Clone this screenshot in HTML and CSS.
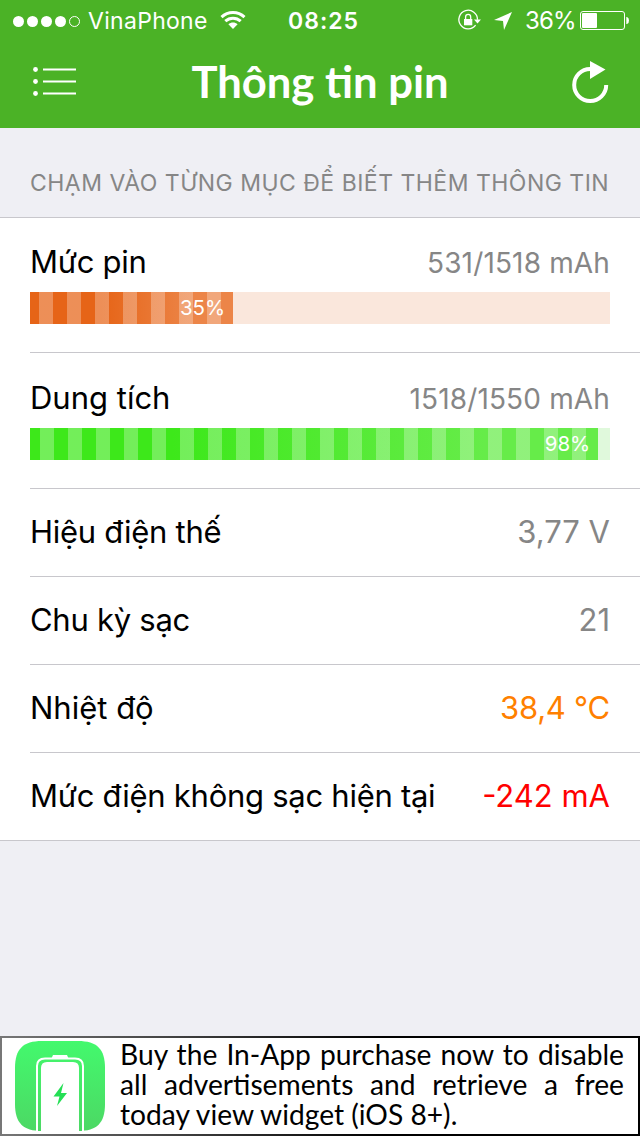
FILE: index.html
```html
<!DOCTYPE html>
<html lang="vi">
<head>
<meta charset="utf-8">
<title>Thông tin pin</title>
<link rel="stylesheet" href="styles.css">
</head>
<body>
<div class="app">
  <header class="header">
    <div class="status">
      <svg class="signal" width="68" height="12" viewBox="0 0 68 12"><g fill="#fff"><circle cx="5.500" cy="6.500" r="5.500"/><circle cx="19.500" cy="6.500" r="5.500"/><circle cx="33.500" cy="6.500" r="5.500"/><circle cx="47.500" cy="6.500" r="5.500"/></g><circle cx="61.500" cy="6.500" r="5" fill="none" stroke="#fff"/></svg>
      <span class="carrier">VinaPhone</span>
      <svg class="wifi" width="26" height="20" viewBox="0 0 26 20"><g fill="none" stroke="#fff" stroke-width="3"><path d="M1.5 7.2C8 1 18 1 24.500 7.200"/><path d="M5.300 11.200C9.700 7.200 16.300 7.200 20.700 11.200"/></g><path d="M8.400 14.300C11 12 15 12 17.600 14.300L13 19Z" fill="#fff"/></svg>
      <span class="time">08:25</span>
      <svg class="lock" width="24" height="20" viewBox="0 0 24 20"><path d="M17.600 15.200A9.300 9.300 0 1 1 19.500 9.800" fill="none" stroke="#fff" stroke-width="1.300"/><path d="M16 9.500H23L19.500 13.500Z" fill="#fff"/><rect x="6" y="9" width="8.300" height="6.300" fill="#fff"/><path d="M7.600 9.500V7A2.500 2.500 0 0 1 12.700 7V9.500" fill="none" stroke="#fff" stroke-width="1.300"/></svg>
      <svg class="locate" width="18" height="18" viewBox="0 0 18 18"><path d="M18 0L10 18L9 9L0 8Z" fill="#fff"/></svg>
      <span class="percent">36%</span>
      <svg class="battery" width="50" height="20" viewBox="0 0 50 20"><rect x=".5" y="1.500" width="44" height="18" rx="2.500" fill="none" stroke="#fff"/><rect x="2" y="3" width="15" height="15" rx="1" fill="#fff"/><path d="M46.300 7H47Q49 7.500 49 10.500T47 14H46.300Z" fill="#fff"/></svg>
    </div>
    <div class="nav">
      <svg class="menu" width="44" height="30" viewBox="0 0 44 30"><g fill="#fff"><circle cx="2.500" cy="2.500" r="2.400"/><circle cx="2.500" cy="14.500" r="2.400"/><circle cx="2.500" cy="26.500" r="2.400"/><path d="M10 1.500h33v2H10zM10 13.500h33v2H10zM10 25.500h33v2H10z"/></g></svg>
      <h1 class="title">Thông tin pin</h1>
      <svg class="refresh" width="38" height="44" viewBox="0 0 38 44"><path d="M34.200 24A16 16 0 1 1 18.200 8" fill="none" stroke="#fff" stroke-width="4"/><path d="M18 0L33.500 8.500L18 18Z" fill="#fff"/></svg>
    </div>
  </header>
  <div class="hint"><span>CHẠM VÀO TỪNG MỤC ĐỂ BIẾT THÊM THÔNG TIN</span></div>
  <main class="list">
    <section class="row meter first">
      <div class="line"><span class="label">Mức pin</span><span class="amount">531/1518 mAh</span></div>
      <div class="track orange"><div class="fill" style="width:203px"><span>35%</span></div></div>
    </section>
    <section class="row meter">
      <div class="line"><span class="label wide">Dung tích</span><span class="amount">1518/1550 mAh</span></div>
      <div class="track green"><div class="fill" style="width:568px"><span>98%</span></div></div>
    </section>
    <section class="row line"><span class="label">Hiệu điện thế</span><span class="value">3,77 V</span></section>
    <section class="row line"><span class="label">Chu kỳ sạc</span><span class="value">21</span></section>
    <section class="row line"><span class="label wide">Nhiệt độ</span><span class="value warm">38,4 °C</span></section>
    <section class="row line"><span class="label">Mức điện không sạc hiện tại</span><span class="value drain">-242 mA</span></section>
  </main>
  <footer class="ad">
    <svg class="ad-icon" width="90" height="90" viewBox="0 0 90 90">
      <defs><linearGradient id="g" x2="0" y2="1"><stop stop-color="#43f96d"/><stop offset="1" stop-color="#4cd864"/></linearGradient></defs>
      <path d="M27 0H63C82 0 90 8 90 27V63C90 82 82 90 63 90H27C8 90 0 82 0 63V27C0 8 8 0 27 0Z" fill="url(#g)"/>
      <path d="M22 90V25Q22 17.500 30 17.500H60Q68 17.500 68 25V90" fill="none" stroke="#fff" stroke-width="2"/>
      <path d="M26 90V27Q26 21 32 21H58Q64 21 64 27V90Z" fill="#fff"/>
      <path d="M36.500 17.500L38 14H52L53.500 17.500Z" fill="#fff"/>
      <path d="M48.500 42L38.500 55.500H44.500L42 65L52 52H46Z" fill="#25df55"/>
    </svg>
    <div class="ad-text"><p>Buy the In-App purchase now to disable</p><p>all advertisements and retrieve a free</p><p class="end">today view widget (iOS 8+).</p></div>
  </footer>
</div>
</body>
</html>
```
FILE: styles.css
```css
* { box-sizing: border-box; }
body { margin: 0; }
h1, p { margin: 0; }
svg { display: block; flex: none; overflow: visible; }
.app { width: 640px; height: 1136px; display: flex; flex-direction: column; background: #efeff4; font-family: Inter, "Noto Sans", sans-serif; color: #000; white-space: nowrap; overflow: hidden; }
.header { height: 128px; background: #4bb226; color: #fff; }
.status { height: 40px; display: flex; align-items: center; padding: 1px 0 0 13px; font-size: 23px; line-height: 40px; }
.carrier { width: 120px; margin-left: 7px; letter-spacing: .3px; }
.wifi { margin-left: 12px; margin-top: -2px; }
.time { width: 70px; margin-left: 42px; font-weight: 600; letter-spacing: 1px; }
.lock { margin-left: 100px; margin-top: -1px; }
.locate { margin-left: 12px; }
.percent { width: 49px; margin-left: 13px; font-size: 24px; letter-spacing: -.8px; }
.battery { margin-left: 6px; margin-top: -1px; }
.nav { height: 88px; display: grid; grid-template-columns: 44px 1fr 38px; align-items: center; padding: 0 30px 0 33px; }
.title { font: 700 43.6px/60px Lato, sans-serif; text-align: center; margin: -7px 9px 0 0; }
.menu { margin-top: -5px; }
.refresh { margin-top: -2px; }
.hint { height: 90px; border-bottom: 1px solid #c8c7cc; padding: 40px 30px 0; font-size: 23px; line-height: 30px; letter-spacing: .49px; color: #868686; }
.list { height: 623px; background: #fff; border-bottom: 1px solid #c8c7cc; padding-left: 30px; }
.row { height: 88px; padding-right: 30px; padding-bottom: 2px; border-bottom: 1px solid #c8c7cc; }
.row:last-child { border-bottom: 0; padding-bottom: 3px; }
.meter { height: 136px; padding-top: 25px; }
.meter.first { height: 135px; padding-top: 24px; }
.line { display: flex; align-items: center; justify-content: space-between; }
.meter .line { height: 38px; }
.label { font-size: 31px; letter-spacing: -.27px; }
.label.wide { letter-spacing: 0; }
.value { font-size: 31px; color: #868686; }
.amount { font-size: 28px; letter-spacing: .15px; padding-top: 3px; color: #868686; }
.value.warm { color: #ff8000; letter-spacing: -.25px; }
.value.drain { color: #f00; }
.track { height: 32px; margin-top: 12px; }
.fill { height: 32px; padding-right: 8px; text-align: right; color: #fff; font-size: 20.5px; line-height: 32px; letter-spacing: -.1px; }
.orange { background: #fae7dc; }
.orange .fill { background: repeating-linear-gradient(90deg, transparent 0 14px, rgba(255,255,255,.28) 14px 28px) -5px 0 / 300px 32px, linear-gradient(90deg, #e66417 35%, #ec8548 80%); }
.green { background: #e0f9dc; }
.green .fill { background: repeating-linear-gradient(90deg, transparent 0 14px, rgba(255,255,255,.28) 14px 28px) -4px 0 / 700px 32px, linear-gradient(90deg, #3de81a 25%, #66ec49 80%); }
.ad { height: 100px; margin-top: auto; display: flex; padding: 3px 14px 0 13px; background: #fff; border: 2px solid; border-image: linear-gradient(90deg, #777, #000 60%) 1; }
.ad-text { width: 504px; margin: -2px 0 0 15px; font: 28.2px/30px Lato, sans-serif; }
.ad-text p { text-align-last: justify; }
.ad-text .end { text-align-last: left; }
```
